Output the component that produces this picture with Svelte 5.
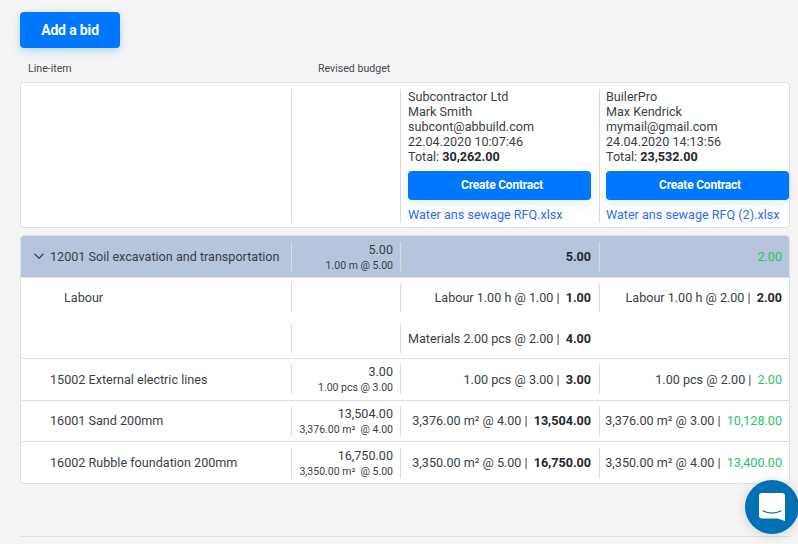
<script>
  const rows = [
    { name: '15002 External electric lines', budget: '3.00', sub: '1.00 pcs @ 3.00', a: '1.00 pcs @ 3.00', av: '3.00', b: '1.00 pcs @ 2.00', bv: '2.00' },
    { name: '16001 Sand 200mm', budget: '13,504.00', sub: '3,376.00 m²\u00a0 @ 4.00', a: '3,376.00 m² @ 4.00', av: '13,504.00', b: '3,376.00 m² @ 3.00', bv: '10,128.00' },
    { name: '16002 Rubble foundation 200mm', budget: '16,750.00', sub: '3,350.00 m²\u00a0 @ 5.00', a: '3,350.00 m² @ 5.00', av: '16,750.00', b: '3,350.00 m² @ 4.00', bv: '13,400.00' }
  ];
  const bidders = [
    { company: 'Subcontractor Ltd', person: 'Mark Smith', email: 'subcont@abbuild.com', date: '22.04.2020 10:07:46', total: '30,262.00', file: 'Water ans sewage RFQ.xlsx' },
    { company: 'BuilerPro', person: 'Max Kendrick', email: 'mymail@gmail.com', date: '24.04.2020 14:13:56', total: '23,532.00', file: 'Water ans sewage RFQ (2).xlsx' }
  ];
</script>

<div class="page">
  <button class="add">Add a bid</button>

  <div class="heads">
    <span class="h1">Line-item</span>
    <span class="h2">Revised budget</span>
  </div>

  <section class="card bids">
    <div class="grid">
      <div></div>
      <div class="cell"></div>
      {#each bidders as b, i}
        <div class="cell bidder" class:second={i === 1}>
          <div>{b.company}</div>
          <div>{b.person}</div>
          <div>{b.email}</div>
          <div>{b.date}</div>
          <div>Total: <b>{b.total}</b></div>
          <button class="create">Create Contract</button>
          <a href="#top" class="file">{b.file}</a>
        </div>
      {/each}
    </div>
  </section>

  <section class="card table">
    <div class="group-head">
      <div class="grid">
        <div class="name">
          <svg class="chev" width="10" height="7" viewBox="0 0 10 7"><path d="M0.500 0.800 5 5.300 9.500 0.800" fill="none" stroke="#3e4a5a" stroke-width="1.300"/></svg>
          <span>12001 Soil excavation and transportation</span>
        </div>
        <div class="cell budget"><div>5.00</div><small>1.00 m @ 5.00</small></div>
        <div class="cell val a"><b>5.00</b></div>
        <div class="cell val"><span class="green">2.00</span></div>
      </div>
    </div>

    <div class="sub">
      <div class="grid">
        <div class="name indent">Labour</div>
        <div class="cell"></div>
        <div class="cell val a">Labour 1.00 h @ 1.00 |<b>1.00</b></div>
        <div class="cell val">Labour 1.00 h @ 2.00 |<b>2.00</b></div>
      </div>
      <div class="grid">
        <div></div>
        <div class="cell"></div>
        <div class="cell val a">Materials 2.00 pcs @ 2.00 |<b>4.00</b></div>
        <div></div>
      </div>
    </div>

    {#each rows as r}
      <div class="row">
        <div class="grid">
          <div class="name plain">{r.name}</div>
          <div class="cell budget"><div>{r.budget}</div><small>{r.sub}</small></div>
          <div class="cell val a">{r.a} |<b>{r.av}</b></div>
          <div class="cell val">{r.b} |<span class="green">{r.bv}</span></div>
        </div>
      </div>
    {/each}
  </section>

  <hr />
</div>

<div class="chat">
  <svg width="26" height="28" viewBox="0 0 26 28">
    <path d="M3 0H23a3 3 0 0 1 3 3V28L18.500 25.500H3a3 3 0 0 1-3-3V3a3 3 0 0 1 3-3Z" fill="#fff"/>
    <path d="M4 18C9.500 20.500 16.500 20.500 22 18" fill="none" stroke="#0071b2" stroke-width="1.300" stroke-linecap="round"/>
  </svg>
</div>

<style>
  :global(body) {
    margin: 0;
    background: #f4f4f4;
    overflow: hidden;
  }
  .page {
    box-sizing: border-box;
    height: 544px;
    padding: 12px 8px 0 20px;
    font-family: Roboto, "Liberation Sans", sans-serif;
    font-size: 12.600px;
    line-height: 15px;
    color: #3a3f46;
  }
  button {
    border: 0;
    color: #fff;
    background: #0077ff;
    font-family: inherit;
    font-weight: 700;
    border-radius: 4px;
    display: block;
    padding: 0;
  }
  .add {
    width: 100px;
    height: 36px;
    font-size: 14px;
    letter-spacing: -0.15px;
    box-shadow: 0 3px 8px rgba(0, 119, 255, 0.25);
  }
  .heads {
    display: grid;
    grid-template-columns: 290px 1fr;
    padding: 14px 0 0 8px;
    height: 20px;
    font-size: 10.600px;
    line-height: 14px;
    color: #444a52;
  }
  .card {
    background: #fff;
    border: 1px solid #dde1e2;
    border-radius: 4px;
  }
  .grid {
    display: grid;
    grid-template-columns: 270px 109px 199px 1fr;
  }
  .cell {
    border-left: 1px solid #d8dbdc;
  }
  .bids {
    padding: 6px 0 5px;
  }
  .bidder {
    padding: 0 8px 0 7px;
    height: 133px;
    min-width: 0;
  }
  .bidder.second {
    padding: 0 0 0 6px;
  }
  b {
    font-weight: 700;
    color: #24282d;
  }
  .create {
    box-sizing: border-box;
    width: 183px;
    height: 29px;
    margin-top: 7px;
    padding: 0 0 2px 5px;
    font-size: 12px;
    letter-spacing: -0.2px;
    box-shadow: 0 4px 8px rgba(0, 119, 255, 0.12);
  }
  .file {
    display: block;
    margin-top: 7px;
    color: #2a6df0;
    text-decoration: none;
    white-space: nowrap;
  }
  .table {
    margin-top: 7px;
    overflow: hidden;
  }
  .group-head {
    background: #b6c4dc;
    padding: 6px 0;
    height: 29px;
    border-bottom: 1px solid #dde1e2;
  }
  .name {
    display: flex;
    align-items: center;
    gap: 6px;
    padding-left: 13px;
    white-space: nowrap;
  }
  .name.indent {
    padding-left: 43px;
  }
  .name.plain {
    padding-left: 29px;
  }
  .budget {
    text-align: right;
    padding-right: 7px;
    height: 29px;
  }
  .budget > div {
    line-height: 16px;
  }
  .budget small {
    display: block;
    font-size: 10.500px;
    line-height: 16px;
  }
  .val {
    display: flex;
    justify-content: flex-end;
    align-items: center;
    height: 29px;
    padding-right: 7px;
    white-space: nowrap;
  }
  .val.a {
    padding-right: 8px;
  }
  .val b, .val .green {
    margin-left: 6px;
  }
  .green {
    color: #1fc76a;
  }
  .sub {
    display: flex;
    flex-direction: column;
    gap: 12px;
    padding: 5px 0;
  }
  .row {
    border-top: 1px solid #dde1e2;
    padding: 5px 0;
  }
  .sub + .row {
    padding-bottom: 6px;
  }
  .sub + .row + .row + .row {
    padding-top: 6px;
  }
  .row .budget, .row .val {
    height: 30px;
    box-sizing: border-box;
  }
  .row + .row .val, .row + .row .name {
    padding-bottom: 2px;
    box-sizing: border-box;
  }
  hr {
    border: 0;
    border-top: 1px solid #dde1e2;
    margin: 52px 0 0;
  }
  .chat {
    position: fixed;
    left: 745px;
    top: 480px;
    width: 54px;
    height: 54px;
    border-radius: 50%;
    background: #0071b2;
    box-shadow: 0 1px 12px rgba(0, 0, 0, 0.15);
    display: flex;
    align-items: center;
    justify-content: center;
  }
</style>
